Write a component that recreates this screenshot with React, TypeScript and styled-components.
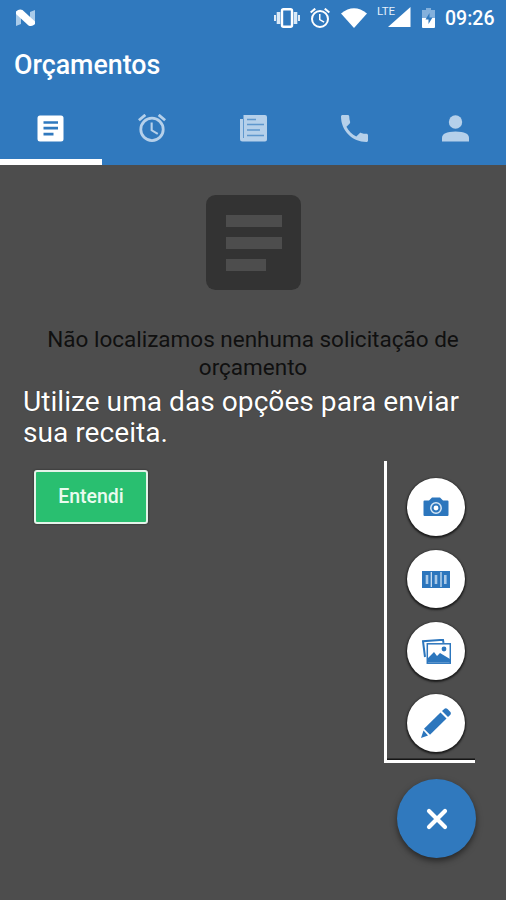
import React from "react";
import styled, { createGlobalStyle } from "styled-components";

const BLUE = "#3079be";
const GREY = "#4d4d4d";
const PALE = "#b5d0ea";

const GlobalStyle = createGlobalStyle`
  * { box-sizing: border-box; }
  body { margin: 0; background: ${GREY}; font-family: Roboto, "Liberation Sans", sans-serif; }
  svg { display: block; flex: none; }
`;

const Screen = styled.div`
  width: 506px;
  height: 900px;
  display: flex;
  flex-direction: column;
  background: ${GREY};
  overflow: hidden;
`;

const Header = styled.header`
  height: 165px;
  flex: none;
  display: flex;
  flex-direction: column;
  background: ${BLUE};
  color: #fff;
`;

const StatusBar = styled.div`
  height: 36px;
  display: flex;
  align-items: center;
  padding: 0 11px 0 15px;
`;

const StatusIcons = styled.div`
  margin-left: auto;
  display: flex;
  align-items: center;
`;

const Clock = styled.span`
  width: 50px;
  margin-left: 10px;
  font-size: 19.5px;
  font-weight: 500;
  line-height: 37px;
  white-space: nowrap;
`;

const Title = styled.h1`
  margin: 0;
  height: 57px;
  padding-left: 14px;
  font-size: 26.8px;
  font-weight: 500;
  line-height: 59px;
`;

const Tabs = styled.nav`
  flex: 1;
  display: grid;
  grid-template-columns: 102px repeat(4, 1fr);
`;

const Tab = styled.button<{ $active?: boolean }>`
  border: 0;
  padding: ${(p) => (p.$active ? "4px 1px 0 0" : "0 1px 2px 0")};
  background: none;
  color: ${(p) => (p.$active ? "#fff" : PALE)};
  display: flex;
  align-items: center;
  justify-content: center;
  border-bottom: ${(p) => (p.$active ? "6px solid #fff" : "0")};
`;

const EmptyState = styled.section`
  padding-top: 30px;
  height: 221px;
  flex: none;
  display: flex;
  flex-direction: column;
  align-items: center;
`;

const EmptyText = styled.p`
  margin: 35px 0 0;
  width: 430px;
  text-align: center;
  color: #101010;
  font-size: 22.5px;
  line-height: 28px;
`;

const Hint = styled.p`
  margin: 0;
  padding-left: 23px;
  height: 75px;
  flex: none;
  font-size: 28.15px;
  line-height: 31px;
  color: #fff;
  text-shadow: 0 0 1px #222;
  white-space: nowrap;
`;

const Actions = styled.div`
  display: flex;
  justify-content: space-between;
  align-items: flex-start;
  padding: 0 31px 0 34px;
`;

const Confirm = styled.button`
  margin-top: 9px;
  width: 114px;
  height: 54px;
  padding: 0 0 2px;
  border: 2px solid #e4f3e9;
  border-radius: 3px;
  background: #29bf70;
  color: #e9fbef;
  font: 500 19.5px Roboto, "Liberation Sans", sans-serif;
  box-shadow: 0 0 2px #222;
`;

const Dial = styled.div`
  width: 91px;
  height: 302px;
  display: flex;
  flex-direction: column;
  align-items: center;
  gap: 14px;
  padding: 17px 0 0 10px;
  border-left: 3px solid #fff;
  border-bottom: 3px solid #fff;
  box-shadow: inset 0 -2px 0 -0.5px #151515;
`;

const DialButton = styled.button`
  width: 58px;
  height: 58px;
  flex: none;
  border: 0;
  padding: 0;
  border-radius: 50%;
  background: #fff;
  color: #2c76bd;
  display: grid;
  place-items: center;
  box-shadow: 0 1px 2px 1px #1b1b1b;
`;

const Fab = styled.button`
  align-self: flex-end;
  margin: 16px 30px 0 0;
  width: 79px;
  height: 79px;
  flex: none;
  border: 0;
  padding: 0;
  border-radius: 50%;
  background: ${BLUE};
  display: grid;
  place-items: center;
  box-shadow: 0 3px 6px rgba(0, 0, 0, 0.5);
`;

const Nougat = () => (
  <svg width="21" height="18" viewBox="0 0 21 18">
    <path d="M1 3l5-2v14l-5 2zM15 3l5-2v14l-5 2z" fill="#a9cbea" />
    <path d="M1 2.500Q4-.5 7.500 1L20 12.500v2.500q-3 3-6.500 1.500L1 5z" fill="#fff" />
  </svg>
);

const Vibrate = () => (
  <svg width="26" height="20" viewBox="0 0 26 20">
    <path d="M1 7v6M25 7v6" stroke="#fff" strokeWidth="1.700" />
    <path d="M4.500 4v12M21.500 4v12" stroke="#d9e9f7" strokeWidth="3.600" />
    <rect x="8" y="1.200" width="10" height="17.600" rx="1.500" fill="none" stroke="#fff" strokeWidth="2.400" />
  </svg>
);

const Alarm = ({ size }: { size: number }) => (
  <svg width={size} height={size} viewBox="2 2 20 20" fill="currentColor">
    <path d="M22 5.720l-4.600-3.860-1.290 1.530 4.600 3.860L22 5.720zM7.880 3.390L6.600 1.860 2 5.710l1.290 1.530 4.590-3.850zM12.500 8H11v6l4.750 2.850.75-1.230-4-2.370V8zM12 4a9 9 0 1 0 0 18 9 9 0 0 0 0-18zm0 16a7 7 0 1 1 0-14 7 7 0 0 1 0 14z" />
  </svg>
);

const AlarmSlot = styled.span`
  margin: 0 11px 0 10px;
`;

const Wifi = () => (
  <svg width="26" height="20" viewBox="0 0 26 20">
    <path d="M0 5.500Q13-5 26 5.500L13 20z" fill="#fff" />
  </svg>
);

const Signal = styled.span`
  display: flex;
  align-items: flex-start;
  height: 26px;
  margin: 0 11px 0 10px;

  small {
    width: 11px;
    font-size: 11.5px;
    line-height: 12px;
    color: #e4f0fa;
  }

  svg { margin-top: 2px; }
`;

const SignalBars = () => (
  <svg width="23" height="20" viewBox="0 0 23 20">
    <path d="M22.500 0v20H0z" fill="#fff" />
  </svg>
);

const Battery = () => (
  <svg width="13" height="20" viewBox="0 0 13 20">
    <path d="M4 0h5v2h4v8H0V2h4z" fill="#83b0dc" />
    <path d="M0 10h13v9q0 1-1 1H1q-1 0-1-1z" fill="#fff" />
    <path d="M7.500 5L3.500 11.500h3V16l4-6.500h-3z" fill={BLUE} />
  </svg>
);

const Article = () => (
  <svg width="27" height="27" viewBox="0 0 27 27">
    <rect x="0.500" y="0.500" width="26" height="26" rx="2.500" fill="currentColor" />
    <path d="M6.500 7.500H21M6.500 13.200H21M6.500 19.200H16.500" stroke={BLUE} strokeWidth="2.700" />
  </svg>
);

const News = () => (
  <svg width="27" height="27" viewBox="0 0 27 27">
    <path d="M3.500 0H25q2 0 2 2v22.500q0 2-2 2H2.500q-2.500 0-2.500-2.500V4h3.500z" fill="currentColor" />
    <path d="M3.500 4v19" stroke={BLUE} strokeWidth="0.900" opacity="0.7" />
    <path d="M7 4.500H16M7 9.500H24M7 15H20M7 20.500H24" stroke={BLUE} strokeWidth="1.300" opacity="0.65" />
  </svg>
);

const Phone = () => (
  <svg width="27" height="27" viewBox="3 3 18 18" fill="currentColor">
    <path d="M6.620 10.790c1.440 2.830 3.760 5.140 6.590 6.590l2.200-2.200c.27-.27.67-.36 1.020-.24 1.120.37 2.330.57 3.570.57.55 0 1 .45 1 1V20c0 .55-.45 1-1 1C10.610 21 3 13.390 3 4c0-.55.45-1 1-1h3.500c.55 0 1 .45 1 1 0 1.250.2 2.450.57 3.570.11.35.03.74-.25 1.020z" />
  </svg>
);

const Person = () => (
  <svg width="27" height="27" viewBox="0 0 27 27" fill="currentColor">
    <circle cx="13.500" cy="7" r="6.700" />
    <path d="M0 26.500V23q0-6.500 13.500-6.500T27 23v3.500z" />
  </svg>
);

const EmptyIcon = () => (
  <svg width="95" height="95" viewBox="0 0 95 95">
    <rect width="95" height="95" rx="9.500" fill="#333" />
    <path d="M20 26H76M20 48H76M20 70H60" stroke={GREY} strokeWidth="12" />
  </svg>
);

const Camera = () => (
  <svg width="26" height="20" viewBox="0 0 26 20">
    <path d="M.5 4.500q0-1 1-1H6l3-3h8l3 3h4.500q1 0 1 1v13.500q0 1-1 1h-23q-1 0-1-1z" fill="currentColor" />
    <circle cx="13" cy="11" r="5.200" fill="none" stroke="#d5e6f5" strokeWidth="1.500" />
    <circle cx="13" cy="11" r="2.400" fill="#fff" />
  </svg>
);

const Barcode = () => (
  <svg width="28" height="17" viewBox="0 0 28 17">
    <rect width="28" height="17" fill="currentColor" />
    <path d="M9.300 1v15M19 1v15" stroke="#d5e6f5" strokeWidth="1.200" />
    <path d="M5 4v9M14 4v9M23.300 4v9" stroke="#a9c9e8" strokeWidth="2.600" />
  </svg>
);

const Photos = () => (
  <svg width="29" height="25" viewBox="0 0 29 25">
    <path d="M3 18L1 2.200 21 .8l.5 3" fill="none" stroke="currentColor" strokeWidth="2" />
    <rect x="5.300" y="4.800" width="23" height="19.400" fill="#fff" stroke="currentColor" strokeWidth="1.500" />
    <path d="M6 23.500V19l6-6 3 4 3-3 10 6v3.500z" fill="currentColor" />
    <circle cx="22" cy="10" r="2.400" fill="currentColor" />
  </svg>
);

const Pencil = () => (
  <svg width="30" height="30" viewBox="0 0 30 30">
    <path d="M0 30l2.500-7.500 4.500 5z" fill="currentColor" />
    <path d="M3 20.800L19.500 4.500l6 6L9 26.800z" fill="currentColor" />
    <path d="M21 3l2.500-2.300q1.500-1 3 .3l2.700 2.700q1.300 1.500.2 3L27 9z" fill="currentColor" />
  </svg>
);

const Close = () => (
  <svg width="22" height="22" viewBox="0 0 22 22">
    <path d="M3 3l16 16M19 3L3 19" stroke="#fff" strokeWidth="4.200" strokeLinecap="round" />
  </svg>
);

export default function App() {
  return (
    <Screen>
      <GlobalStyle />
      <Header>
        <StatusBar>
          <Nougat />
          <StatusIcons>
            <Vibrate />
            <AlarmSlot><Alarm size={20} /></AlarmSlot>
            <Wifi />
            <Signal><small>LTE</small><SignalBars /></Signal>
            <Battery />
            <Clock>09:26</Clock>
          </StatusIcons>
        </StatusBar>
        <Title>Orçamentos</Title>
        <Tabs>
          <Tab $active><Article /></Tab>
          <Tab><Alarm size={28} /></Tab>
          <Tab><News /></Tab>
          <Tab><Phone /></Tab>
          <Tab><Person /></Tab>
        </Tabs>
      </Header>
      <EmptyState>
        <EmptyIcon />
        <EmptyText>Não localizamos nenhuma solicitação de orçamento</EmptyText>
      </EmptyState>
      <Hint>Utilize uma das opções para enviar<br />sua receita.</Hint>
      <Actions>
        <Confirm>Entendi</Confirm>
        <Dial>
          <DialButton><Camera /></DialButton>
          <DialButton><Barcode /></DialButton>
          <DialButton><Photos /></DialButton>
          <DialButton><Pencil /></DialButton>
        </Dial>
      </Actions>
      <Fab><Close /></Fab>
    </Screen>
  );
}
